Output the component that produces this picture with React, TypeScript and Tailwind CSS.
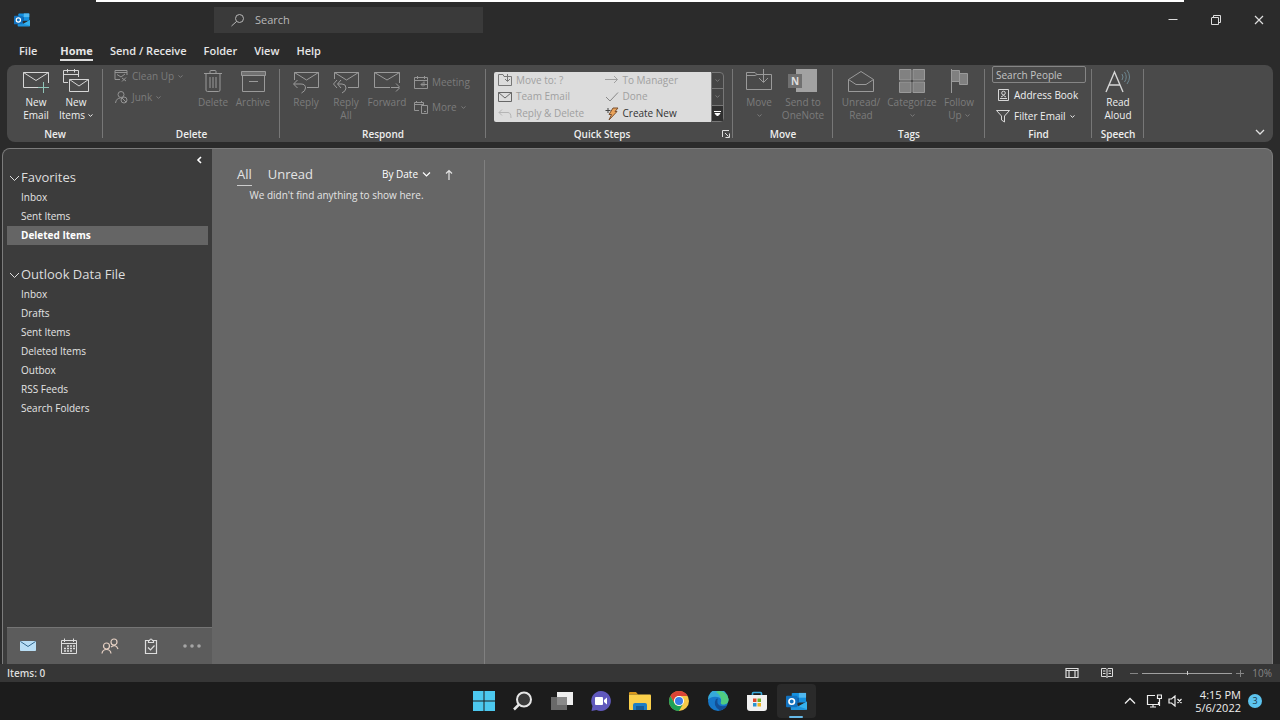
import type { ReactNode } from 'react';

type Children = { children: ReactNode };

const tabs = ['File', 'Home', 'Send / Receive', 'Folder', 'View', 'Help'];
const favorites = ['Inbox', 'Sent Items', 'Deleted Items'];
const dataFile = ['Inbox', 'Drafts', 'Sent Items', 'Deleted Items', 'Outbox', 'RSS Feeds', 'Search Folders'];

function Icon({ w = 26, h = 26, children }: Children & { w?: number; h?: number }) {
  return (
    <svg
      width={w}
      height={h}
      viewBox={`0 0 ${w} ${h}`}
      fill="none"
      stroke="currentColor"
      strokeWidth="1"
      className="shrink-0"
      aria-hidden="true"
    >
      {children}
    </svg>
  );
}

function Caret() {
  return (
    <svg width="5" height="3" viewBox="0 0 5 3" fill="none" stroke="currentColor" className="inline-block align-middle">
      <path d="M0.5 0.5L2.5 2.3L4.5 0.5" />
    </svg>
  );
}

function Group({ label, width, children, launcher }: Children & { label: string; width: string; launcher?: boolean }) {
  return (
    <section className={`relative flex shrink-0 flex-col justify-between ${width}`}>
      <div className="flex items-start pt-1">{children}</div>
      <div className="flex items-center">
        <h2 className="flex-1 text-center text-[10px] leading-4 font-semibold text-[#eeeeee]">{label}</h2>
        {launcher && (
          <button aria-label={`${label} options`} className="mr-[3px] ml-1 text-[#e0e0e0]">
            <Icon w={8} h={8}>
              <path d="M0.5 7V0.5H7M3 3L6.5 6.5M7.5 3.5V7.5H3.5" />
            </Icon>
          </button>
        )}
      </div>
      <span className="absolute top-1 right-0 bottom-1 w-px bg-[#777777]" />
    </section>
  );
}

type BigProps = { icon: ReactNode; lines: ReactNode[]; width?: string; disabled?: boolean };

function BigButton({ icon, lines, width = 'w-10', disabled }: BigProps) {
  return (
    <button
      disabled={disabled}
      className={`flex shrink-0 flex-col items-center text-[10px] leading-[13px] whitespace-nowrap ${width} ${
        disabled ? 'text-[#7c7c7c]' : 'font-medium text-[#f0f0f0]'
      }`}
    >
      <span className={`pb-px ${disabled ? 'text-[#9a9a9a]' : 'text-[#d6d6d6]'}`}>{icon}</span>
      {lines.map((line, i) => (
        <span key={i} className="flex h-[13px] items-center gap-[3px]">
          {line}
        </span>
      ))}
    </button>
  );
}

function SmallButton({ icon, children, disabled }: Children & { icon: ReactNode; disabled?: boolean }) {
  return (
    <button
      disabled={disabled}
      className={`flex items-center gap-1 text-[10px] leading-[14px] whitespace-nowrap ${
        disabled ? 'text-[#7c7c7c]' : 'font-medium text-[#f0f0f0]'
      }`}
    >
      <span className={disabled ? 'text-[#949494]' : 'text-[#d6d6d6]'}>{icon}</span>
      {children}
    </button>
  );
}

function OutlookLogo({ size }: { size: number }) {
  return (
    <svg width={size} height={size} viewBox="0 0 22 22" aria-hidden="true">
      <rect x="6" y="2" width="15" height="10" rx="1" fill="#1490df" />
      <path d="M13.5 2H21V7H13.5z" fill="#50b8f0" />
      <path d="M6 7h7.5v5H6z" fill="#0f5da8" />
      <path d="M5 11l8.500 5L22 11v8a1 1 0 0 1-1 1H6a1 1 0 0 1-1-1z" fill="#1f94dc" />
      <path d="M22 11v8l-9-3z" fill="#36b2ee" />
      <rect x="0" y="5" width="12" height="12" rx="1" fill="#1272bf" />
      <circle cx="6" cy="11" r="2.900" fill="none" stroke="#fff" strokeWidth="1.700" />
    </svg>
  );
}

const cleanUpIcon = (
  <Icon w={14} h={14}>
    <path d="M1 10.500V1.500H13V6M1 3.500H13M1 10.500H6M3 5.500L7 8L11 5" />
    <path d="M8 9l4 3M12 8.500l-4 4" />
  </Icon>
);
const junkIcon = (
  <Icon w={14} h={14}>
    <circle cx="7" cy="4.500" r="3" />
    <path d="M1.500 13C2 9.500 4 8 6.500 8" />
    <circle cx="10" cy="10" r="3" />
    <path d="M8 8l4 4" />
  </Icon>
);

function Ribbon() {
  return (
    <div className="mx-[7px] flex h-[77px] rounded-lg bg-[#4a4a4a]">
      <Group label="New" width="w-24">
        <div className="flex pl-[9px]">
          <BigButton
            icon={
              <Icon>
                <path d="M18 18.500H0.500V3.500H25.500V14M0.500 3.500L13 11.500L25.500 3.500" />
                <path d="M20.500 13v11M15 18.500h11" stroke="#8fc4b7" />
              </Icon>
            }
            lines={['New', 'Email']}
          />
          <BigButton
            icon={
              <Icon>
                <path d="M5 13.500H0.500V1.500H15.500V8M0.500 5.500H15.500M4.500 0V3.500M11.500 0V3.500" />
                <path d="M6.500 10.500H25.500V22.500H6.500zM6.500 10.500L16 17L25.500 10.500" />
              </Icon>
            }
            lines={['New', <>Items <Caret /></>]}
          />
        </div>
      </Group>

      <Group label="Delete" width="w-[177px]">
        <div className="flex w-[90px] flex-col gap-[7px] pl-[11px]">
          <SmallButton disabled icon={cleanUpIcon}>Clean Up <Caret /></SmallButton>
          <SmallButton disabled icon={junkIcon}>Junk <Caret /></SmallButton>
        </div>
        <BigButton
          disabled
          icon={
            <Icon>
              <path d="M4 4.500H22M10 4.500V2.500Q10 1.500 11 1.500H15Q16 1.500 16 2.500V4.500M6 4.500V21Q6 22.500 7.500 22.500H18.500Q20 22.500 20 21V4.500M10 8V19M13 8V19M16 8V19" />
            </Icon>
          }
          lines={['Delete']}
        />
        <BigButton
          disabled
          icon={
            <Icon>
              <path d="M1.500 2.500H25.500V6.500H1.500z" fill="#707070" />
              <path d="M2.500 6.500V22.500H24.500V6.500M9 12.500H18" />
            </Icon>
          }
          lines={['Archive']}
        />
      </Group>

      <Group label="Respond" width="w-[206px]">
        <div className="flex pl-[6px]">
          <BigButton
            disabled
            icon={
              <Icon>
                <path d="M1.500 11V3.500H25.500V18.500H14M1.500 3.500L13.500 11L25.500 3.500" />
                <path d="M4.500 11L0.500 15L4.500 19M1 15H8Q12.500 15 12.500 19Q12.500 22 8.500 24" />
              </Icon>
            }
            lines={['Reply']}
          />
          <BigButton
            disabled
            icon={
              <Icon>
                <path d="M1.500 10V3.500H25.500V18.500H15M1.500 3.500L13.500 11L25.500 3.500" />
                <path d="M4 11L0.500 15L4 19M8 11L4.500 15L8 19M5 15H9Q13 15 13 19Q13 22 9 24" />
              </Icon>
            }
            lines={['Reply', 'All']}
          />
          <BigButton
            disabled
            width="w-[42px]"
            icon={
              <Icon>
                <path d="M16 18.500H0.500V3.500H25.500V14M0.500 3.500L13 11L25.500 3.500" />
                <path d="M17 18.500H25M22 14.500L26 18.500L22 22.500" />
              </Icon>
            }
            lines={['Forward']}
          />
        </div>
        <div className="flex flex-col gap-[11px] pt-[6px] pl-[6px]">
          <SmallButton
            disabled
            icon={
              <Icon w={14} h={14}>
                <path d="M0.500 2.500H13.500V13.500H0.500zM0.500 5.500H13.500M3.500 1V4M10.500 1V4M10 6.500V11M7 9.500H13M9 7.500L7 9.500L9 11.500" />
              </Icon>
            }
          >
            Meeting
          </SmallButton>
          <SmallButton
            disabled
            icon={
              <Icon w={14} h={14}>
                <path d="M5 10.500H0.500V2.500H9.500V5M0.500 4.500H9.500M2.500 1V3M7.500 1V3M7.500 5.500H13.500V13.500H7.500zM10 11.500H12" />
              </Icon>
            }
          >
            More <Caret />
          </SmallButton>
        </div>
      </Group>

      <Group label="Quick Steps" width="w-[247px]" launcher>
        <div className="mt-[3px] ml-2 flex h-[50px] w-[230px]">
          <div className="grid w-[217px] grid-cols-2 grid-rows-3 rounded-l-xs bg-[#dcdcdc] pl-1 text-[#a0a0a0]">
            <button disabled className="flex items-center gap-1 text-[10px] whitespace-nowrap">
              <Icon w={14} h={14}>
                <path d="M0.500 12.500V1.500H5L6 3.500H13.500V12.500zM9.500 1V8M7 6L9.500 8.500L12 6" stroke="#777777" />
              </Icon>
              Move to: ?
            </button>
            <button disabled className="flex items-center gap-1 text-[10px] whitespace-nowrap">
              <Icon w={14} h={14}>
                <path d="M0 6.500H12.500M9 3L12.500 6.500L9 10" />
              </Icon>
              To Manager
            </button>
            <button disabled className="flex items-center gap-1 text-[10px] whitespace-nowrap">
              <Icon w={14} h={14}>
                <path d="M0.500 2.500H13.500V11.500H0.500zM0.500 2.500L7 8L13.500 2.500" stroke="#666666" />
              </Icon>
              Team Email
            </button>
            <button disabled className="flex items-center gap-1 text-[10px] whitespace-nowrap">
              <Icon w={14} h={14}>
                <path d="M1 7L5 11L13 2.500" stroke="#888888" />
              </Icon>
              Done
            </button>
            <button disabled className="flex items-center gap-1 text-[10px] whitespace-nowrap">
              <Icon w={14} h={14}>
                <path d="M4 2.500L1 5.500L4 8.500M1 5.500H10Q13 5.500 13 11" stroke="#b5b5b5" />
              </Icon>
              Reply &amp; Delete
            </button>
            <button className="flex items-center gap-1 text-[10px] whitespace-nowrap text-[#333333]">
              <Icon w={14} h={14}>
                <path d="M8 1H13L10 4.500H12L4 13L6.500 7.500H4z" fill="#e9a35a" stroke="#7b5130" />
                <path d="M0.500 3.500H5.500M3 1V6" stroke="#444444" />
              </Icon>
              Create New
            </button>
          </div>
          <div className="flex flex-1 flex-col divide-y divide-[#777777] rounded-r-sm border border-[#777777] bg-[#454545] text-[#777777]">
            <button aria-label="Scroll up" disabled className="flex flex-1 items-center justify-center"><Caret /></button>
            <button aria-label="Scroll down" disabled className="flex flex-1 items-center justify-center"><Caret /></button>
            <button aria-label="More quick steps" className="flex flex-1 items-center justify-center bg-[#303030] text-white">
              <Icon w={7} h={7}>
                <path d="M0 1.500H7M1 3.500H6L3.500 6z" fill="currentColor" />
              </Icon>
            </button>
          </div>
        </div>
      </Group>

      <Group label="Move" width="w-[100px]">
        <div className="flex pl-[6px]">
          <BigButton
            disabled
            icon={
              <Icon>
                <path d="M0.500 20.500V3.500H9L11 5.500H25.500V20.500zM0.500 6.500H9L11 5.500" />
                <path d="M17.500 0V13M13 9L17.500 13.500L22 9" />
              </Icon>
            }
            lines={['Move', <Caret />]}
          />
          <BigButton
            disabled
            width="w-12"
            icon={
              <span className="relative block">
                <Icon w={30} h={26}>
                  <path d="M8 0H29V23H8z" fill="#a2a2a2" stroke="none" />
                  <path d="M0 5H14V19H0z" fill="#707070" stroke="none" />
                </Icon>
                <span className="absolute top-[5px] left-[3px] text-[10px] leading-[14px] font-bold text-[#dddddd]">N</span>
              </span>
            }
            lines={['Send to', 'OneNote']}
          />
        </div>
      </Group>

      <Group label="Tags" width="w-[152px]">
        <div className="flex pl-2">
          <BigButton
            disabled
            icon={
              <Icon>
                <path d="M0.500 10.500L13 2.500L25.500 10.500V22.500H0.500zM0.500 10.500L8 15.500H18L25.500 10.500" />
              </Icon>
            }
            lines={['Unread/', 'Read']}
          />
          <BigButton
            disabled
            width="w-[62px]"
            icon={
              <Icon>
                <path d="M0.500 0.500H12V11H0.500zM14 0.500H25.500V11H14zM0.500 13H12V23.500H0.500zM14 13H25.500V23.500H14z" fill="#818181" />
              </Icon>
            }
            lines={['Categorize', <Caret />]}
          />
          <BigButton
            disabled
            width="w-8"
            icon={
              <Icon>
                <path d="M5.500 0V24" />
                <path d="M5.500 1.500H13.500V12.500H5.500zM13.500 4.500H21.500V15.500H13.500V12.500" fill="#808080" />
              </Icon>
            }
            lines={['Follow', <>Up <Caret /></>]}
          />
        </div>
      </Group>

      <Group label="Find" width="w-[107px]">
        <div className="-mt-[3px] flex w-full flex-col gap-[5px] pr-[6px] pl-[7px]">
          <input
            aria-label="Search People"
            placeholder="Search People"
            className="h-[17px] w-full rounded-xs border border-[#858585] bg-transparent px-[3px] text-[10px] text-white outline-none placeholder:text-[#c4c4c4]"
          />
          <div className="flex flex-col gap-[7px] pl-1">
            <SmallButton
              icon={
                <Icon w={14} h={14}>
                  <path d="M2.500 1.500H12.500V12.500H2.500zM4 10.500H11M5 9Q7.500 6 10 9" />
                  <circle cx="7.500" cy="5" r="1.800" />
                </Icon>
              }
            >
              Address Book
            </SmallButton>
            <SmallButton
              icon={
                <Icon w={14} h={14}>
                  <path d="M0.500 1.500H13.500L8.500 7V13L5.500 11V7z" />
                </Icon>
              }
            >
              Filter Email <Caret />
            </SmallButton>
          </div>
        </div>
      </Group>

      <Group label="Speech" width="w-[52px]">
        <div className="flex w-full justify-center">
          <BigButton
            icon={
              <Icon>
                <path d="M1 23L9.500 3L18 23M4 16H15" strokeWidth="1.400" />
                <path d="M17 5Q19 8 17 11M19.500 3Q23 8 19.500 13M22 1Q27 8 22 15" stroke="#6d8791" />
              </Icon>
            }
            lines={['Read', 'Aloud']}
          />
        </div>
      </Group>

      <button aria-label="Collapse ribbon" className="mr-2 mb-[6px] ml-auto self-end text-[#e0e0e0]">
        <Icon w={10} h={8}>
          <path d="M1 2L5 6L9 2" strokeWidth="1.300" />
        </Icon>
      </button>
    </div>
  );
}

function FolderList({ title, items, selected }: { title: string; items: string[]; selected?: string }) {
  return (
    <section>
      <h3>
        <button className="flex items-center gap-px pl-[6px] text-[13px] leading-[21px] text-[#dedede]">
          <Icon w={11} h={8}>
            <path d="M1 2L5.500 6.500L10 2" />
          </Icon>
          {title}
        </button>
      </h3>
      <ul className="mx-1">
        {items.map((item) => (
          <li key={item}>
            <a
              href="#"
              className={`block pl-[14px] text-[10px] leading-[19px] ${
                item === selected ? 'bg-[#656565] font-bold text-white' : 'font-medium text-[#e4e4e4]'
              }`}
            >
              {item}
            </a>
          </li>
        ))}
      </ul>
    </section>
  );
}

function Sidebar() {
  return (
    <nav className="flex w-[209px] shrink-0 flex-col bg-[#3c3c3c]">
      <button aria-label="Minimize folder pane" className="mt-[5px] mr-[9px] self-end text-white">
        <Icon w={8} h={12}>
          <path d="M6 3L3 6L6 9" strokeWidth="1.600" />
        </Icon>
      </button>
      <div className="flex flex-col gap-[19px] pt-px">
        <FolderList title="Favorites" items={favorites} selected="Deleted Items" />
        <FolderList title="Outlook Data File" items={dataFile} />
      </div>
      <div className="mt-auto ml-1 flex h-[37px] items-center border-t border-[#757575] bg-[#5c5c5c] text-[#dddddd]">
        <button aria-label="Mail" className="flex w-[41px] justify-center">
          <Icon w={16} h={16}>
            <path d="M0.500 3.500H15.500V12.500H0.500z" fill="#b9def5" stroke="#b9def5" />
            <path d="M0.500 3.500L8 8.500L15.500 3.500" stroke="#34698f" />
          </Icon>
        </button>
        <button aria-label="Calendar" className="flex w-[41px] justify-center">
          <Icon w={18} h={16}>
            <path d="M1.500 2.500H16.500V15.500H1.500zM1.500 5.500H16.500M4.500 0.500V4M13.500 0.500V4" />
            <path d="M7 8H15M4 10.500H15M4 13H12" strokeWidth="1.600" strokeDasharray="2 1" />
          </Icon>
        </button>
        <button aria-label="People" className="flex w-[41px] justify-center">
          <Icon w={18} h={16}>
            <g stroke="#e4cfc2" strokeWidth="1.200">
              <circle cx="13" cy="4" r="3" />
              <path d="M10 9Q15 5.500 17 11" />
              <circle cx="5.500" cy="8" r="3" />
              <path d="M1 15.500Q1.500 11.500 5.500 11.500T10 15.500" />
            </g>
          </Icon>
        </button>
        <button aria-label="Tasks" className="flex w-[41px] justify-center">
          <Icon w={14} h={16}>
            <path d="M4 2.500H1.500V15.500H12.500V2.500H10M4.500 4.500V2.500H5.500Q7 -0.500 8.500 2.500H9.500V4.500zM4 9.500L6.500 12L10.500 7.500" strokeWidth="1.200" />
          </Icon>
        </button>
        <button aria-label="More" className="flex w-[41px] justify-center">
          <Icon w={18} h={4}>
            <g fill="#a5a5a5" stroke="none">
              <circle cx="2" cy="2" r="1.800" />
              <circle cx="9" cy="2" r="1.800" />
              <circle cx="16" cy="2" r="1.800" />
            </g>
          </Icon>
        </button>
      </div>
    </nav>
  );
}

function Taskbar() {
  const item = 'flex h-[34px] w-[39px] items-center justify-center';
  return (
    <footer className="grid h-[38px] grid-cols-[1fr_auto_1fr] items-center bg-[#1c1c1c]">
      <span />
      <div className="flex">
        <button aria-label="Start" className={item}>
          <svg width="22" height="20" viewBox="0 0 22 20">
            <path d="M0 0h10.500v9.500H0zM11.500 0H22v9.500H11.500zM0 10.500h10.500V20H0zM11.500 10.500H22V20H11.500z" fill="#4cc8ef" />
          </svg>
        </button>
        <button aria-label="Search" className={item}>
          <svg width="20" height="20" viewBox="0 0 20 20" fill="#3a3a3a" stroke="#e6e6e6" strokeWidth="2">
            <path d="M6 13.500L1 18.500" strokeWidth="2.500" />
            <circle cx="11" cy="8.500" r="7" />
          </svg>
        </button>
        <button aria-label="Task view" className={item}>
          <svg width="22" height="18" viewBox="0 0 22 18">
            <path d="M6 0h16v13H6z" fill="#eeeeee" />
            <path d="M0 5h16v13H0z" fill="#777777" fillOpacity="0.850" />
          </svg>
        </button>
        <button aria-label="Chat" className={item}>
          <svg width="22" height="20" viewBox="0 0 22 20">
            <path d="M11 0a10 10 0 1 1-4.500 19L1.500 20l1-5A10 10 0 0 1 11 0z" fill="#6159bd" />
            <rect x="5" y="6" width="8" height="8" rx="1" fill="#fff" />
            <path d="M14 9l3-2.500v7L14 11z" fill="#fff" />
          </svg>
        </button>
        <button aria-label="File Explorer" className={item}>
          <svg width="22" height="18" viewBox="0 0 22 18">
            <path d="M0 1a1 1 0 0 1 1-1h6l2 2.500H0z" fill="#d9981c" />
            <path d="M0 2.500h21a1 1 0 0 1 1 1V17a1 1 0 0 1-1 1H1a1 1 0 0 1-1-1z" fill="#fbd04b" />
            <path d="M4 18v-5a2 2 0 0 1 2-2h10a2 2 0 0 1 2 2v5z" fill="#1f7fc4" />
            <path d="M7 14h8v4H7z" fill="#175d96" />
          </svg>
        </button>
        <button aria-label="Chrome" className={item}>
          <svg width="20" height="20" viewBox="0 0 20 20">
            <circle cx="10" cy="10" r="10" fill="#f7c948" />
            <path d="M1.340 5A10 10 0 0 1 18.660 5H10a5 5 0 0 0-4.330 7.500z" fill="#db4437" />
            <path d="M1.340 5A10 10 0 0 0 10 20L14.330 12.500A5 5 0 0 1 5.670 12.500z" fill="#1fa05a" />
            <circle cx="10" cy="10" r="5" fill="#fff" />
            <circle cx="10" cy="10" r="4" fill="#3b7de8" />
          </svg>
        </button>
        <button aria-label="Edge" className={item}>
          <svg width="22" height="20" viewBox="0 0 22 20">
            <circle cx="11" cy="10" r="10" fill="#1677c9" />
            <path d="M1 9A10 10 0 0 1 21.500 8Q22 13 17 13.500Q13 13.500 14 11Q15 7 10.500 6Q4 5 1 9z" fill="#35a9d9" />
            <path d="M11 0A10 10 0 0 1 21.500 8Q22 13 17 13.500Q13 13.500 14 11Q15 5 9 1z" fill="#56d66a" fillOpacity="0.800" />
            <path d="M9 8Q5 15 13 19.500Q18 18 20 14.500Q13 17 10.500 12Q10 9 11 7.500z" fill="#134f96" />
          </svg>
        </button>
        <button aria-label="Microsoft Store" className={item}>
          <svg width="20" height="20" viewBox="0 0 20 20">
            <path d="M5.500 5V2.500a1 1 0 0 1 1-1h7a1 1 0 0 1 1 1V5" fill="none" stroke="#39a9dc" strokeWidth="1.600" />
            <path d="M0 4h20v13a3 3 0 0 1-3 3H3a3 3 0 0 1-3-3z" fill="#f1f1f1" />
            <path d="M6 7.500h3.500V11H6z" fill="#e0492c" />
            <path d="M10.500 7.500H14V11h-3.500z" fill="#71ae28" />
            <path d="M6 12h3.500v3.500H6z" fill="#2a93d1" />
            <path d="M10.500 12H14v3.500h-3.500z" fill="#efb322" />
          </svg>
        </button>
        <button aria-label="Outlook" className={`${item} relative rounded-sm bg-[#2a2a2a]`}>
          <OutlookLogo size={21} />
          <span className="absolute bottom-0 h-0.5 w-[14px] rounded-full bg-[#66b9e8]" />
        </button>
      </div>
      <div className="flex items-center justify-end pr-[18px] text-[#eeeeee]">
        <button aria-label="Show hidden icons" className="mr-[10px]">
          <Icon w={12} h={8}>
            <path d="M1 6.500L6 1.500L11 6.500" strokeWidth="1.300" />
          </Icon>
        </button>
        <button aria-label="Network" className="mr-[6px]">
          <Icon w={16} h={14}>
            <path d="M9 1.500H1.500V10.500H12.500V8M4 13H10M7 10.500V13M11.500 1H15.500V4.500H11.500zM13.500 4.500V12" strokeWidth="1.200" />
          </Icon>
        </button>
        <button aria-label="Volume muted" className="mr-3">
          <Icon w={15} h={12}>
            <path d="M1 4H3.500L7 1V11L3.500 8H1zM9.500 4L13.500 8M13.500 4L9.500 8" strokeWidth="1.200" />
          </Icon>
        </button>
        <button className="text-right text-[11px] leading-[13px]">
          <span className="block">4:15 PM</span>
          <span className="block">5/6/2022</span>
        </button>
        <span className="ml-[7px] flex size-[14px] items-center justify-center rounded-full bg-[#5cc3ee] text-[9px] text-[#1c3644]">
          3
        </span>
      </div>
    </footer>
  );
}

export default function App() {
  return (
    <div className="flex min-h-screen flex-col bg-[#2b2b2b] font-['Open_Sans','Noto_Sans',sans-serif]">
      <div className="mx-24 h-0.5 bg-white" />
      <header className="flex h-9 items-center pl-[14px]">
        <OutlookLogo size={16} />
        <label className="ml-[184px] flex h-[26px] w-[269px] items-center gap-[10px] bg-[#3a3a3a] pl-4 text-[#b8b8b8]">
          <Icon w={15} h={14}>
            <circle cx="9.500" cy="5.500" r="4" />
            <path d="M6.500 8.500L1.500 13" />
          </Icon>
          <input
            aria-label="Search"
            placeholder="Search"
            className="w-full bg-transparent text-[11px] outline-none placeholder:text-[#b8b8b8]"
          />
        </label>
        <div className="ml-auto flex text-[#dddddd]">
          <button aria-label="Minimize" className="flex w-[43px] justify-center">
            <Icon w={10} h={10}>
              <path d="M0.500 4.500H9.500" />
            </Icon>
          </button>
          <button aria-label="Restore" className="flex w-[43px] justify-center">
            <Icon w={10} h={10}>
              <path d="M0.500 3Q0.500 2.500 1 2.500H7.500V9.500H0.500zM2.500 2.500V0.500H9.500V7.500H7.500" />
            </Icon>
          </button>
          <button aria-label="Close" className="flex w-[43px] justify-center">
            <Icon w={10} h={10}>
              <path d="M1 1L9 9M9 1L1 9" strokeWidth="1.200" />
            </Icon>
          </button>
        </div>
      </header>

      <nav className="flex h-[27px] items-center gap-[17px] pl-[19px] text-[11px] text-[#e6e6e6]">
        {tabs.map((tab) => (
          <button
            key={tab}
            className={`border-b-2 leading-4 first:mr-[6px] ${
              tab === 'Home' ? 'border-[#dddddd] font-bold' : 'border-transparent font-semibold'
            }`}
          >
            {tab}
          </button>
        ))}
      </nav>

      <Ribbon />

      <main className="mt-[6px] mr-[7px] ml-[2px] flex flex-1 overflow-hidden rounded-t-lg border-x border-t border-[#7c7c7c] bg-[#666666]">
        <Sidebar />
        <section className="relative w-[273px] shrink-0 text-[#e4e4e4]">
          <div className="flex items-center pt-[14px] pl-[25px] text-[13px]">
            <button className="mr-4 border-b border-[#cccccc] leading-[22px]">All</button>
            <button className="border-b border-transparent leading-[22px]">Unread</button>
            <button className="mr-[14px] ml-auto flex items-center gap-1 text-[10px] font-medium text-white">
              By Date
              <Icon w={9} h={7}>
                <path d="M1 1.500L4.500 5L8 1.500" strokeWidth="1.200" />
              </Icon>
            </button>
            <button aria-label="Reverse sort order" className="mr-8">
              <Icon w={8} h={12}>
                <path d="M4 11V1.500M1 4.500L4 1.500L7 4.500" strokeWidth="1.200" />
              </Icon>
            </button>
          </div>
          <p className="pr-[24px] text-center text-[10px] leading-[18px]">We didn&apos;t find anything to show here.</p>
          <span className="absolute top-[11px] right-0 bottom-0 w-px bg-[#808080]" />
        </section>
      </main>

      <div className="flex h-[18px] items-center bg-[#363636] pr-2 pl-[7px] text-[10px] text-[#dddddd]">
        <span className="mr-auto font-semibold">Items: 0</span>
        <button aria-label="Normal view" className="mr-[22px]">
          <Icon w={14} h={12}>
            <path d="M1 1.500H13V10.500H1zM1 3.500H13M4 3.500V10.500M10 3.500V10.500" strokeWidth="1.200" />
          </Icon>
        </button>
        <button aria-label="Reading view" className="mr-[17px]">
          <Icon w={12} h={12}>
            <path d="M0.500 1.500H5L6 2.500L7 1.500H11.500V9.500H7L6 10.500L5 9.500H0.500zM6 2.500V10.500M2 4H4.500M2 6.500H4.500M7.500 4H10M7.500 6.500H10" />
          </Icon>
        </button>
        <button aria-label="Zoom out" className="mr-1 text-[#858585]">
          <Icon w={8} h={8}>
            <path d="M0 4.500H8" />
          </Icon>
        </button>
        <input
          type="range"
          aria-label="Zoom"
          defaultValue={50}
          className="h-2 w-[90px] appearance-none bg-[linear-gradient(#a0a0a0,#a0a0a0)] bg-size-[100%_1px] bg-center bg-no-repeat [&::-webkit-slider-thumb]:h-1 [&::-webkit-slider-thumb]:w-px [&::-webkit-slider-thumb]:appearance-none [&::-webkit-slider-thumb]:bg-[#cccccc]"
        />
        <button aria-label="Zoom in" className="mr-2 ml-1 text-[#858585]">
          <Icon w={8} h={8}>
            <path d="M0 4.500H8M4.500 1V8" />
          </Icon>
        </button>
        <span className="text-[#858585]">10%</span>
      </div>

      <Taskbar />
    </div>
  );
}
